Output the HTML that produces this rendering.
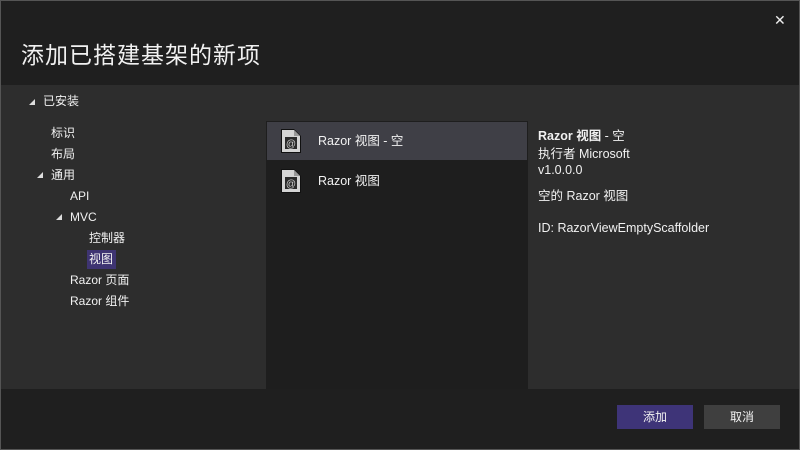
<!DOCTYPE html>
<html><head><meta charset="utf-8"><style>
*{margin:0;padding:0;box-sizing:border-box}
body{width:800px;height:450px;background:#1f1f1f;overflow:hidden;position:relative;font-family:"Liberation Sans","Noto Sans CJK SC",sans-serif;color:#f1f1f1;font-size:12px}
.frame{position:absolute;left:0;top:0;width:800px;height:450px;border:1px solid #555;pointer-events:none;z-index:5}
.title{position:absolute;left:21px;top:36px;font-size:23px;color:#f1f1f1;letter-spacing:1px}
.close{position:absolute;left:774px;top:12px;font-size:14px;color:#eee}
.body{position:absolute;left:0;top:85px;width:800px;height:304px;background:#2d2d2d}
.t{position:absolute;white-space:nowrap;font-size:12px;line-height:16px}
.d{font-size:12.5px}
.tri{position:absolute;width:0;height:0;border-left:6px solid transparent;border-bottom:6px solid #ddd}
.list{position:absolute;left:266px;top:121px;width:262px;height:268px;background:#1e1e1e}
.sel{position:absolute;left:267px;top:122px;width:260px;height:38px;background:#3f3f46}
.btn{position:absolute;top:405px;width:76px;height:24px;text-align:center;line-height:24px;font-size:12px}
</style></head><body>
<div class="frame"></div>
<div class="title">添加已搭建基架的新项</div>
<div class="close">✕</div>
<div class="body"></div>
<div class="tri" style="left:29px;top:99px"></div>
<div class="t" style="left:43px;top:93px">已安装</div>
<div class="t" style="left:51px;top:125px">标识</div>
<div class="t" style="left:51px;top:146px">布局</div>
<div class="tri" style="left:37px;top:172px"></div>
<div class="t" style="left:51px;top:167px">通用</div>
<div class="t" style="left:70px;top:188px">API</div>
<div class="tri" style="left:56px;top:214px"></div>
<div class="t" style="left:70px;top:209px">MVC</div>
<div class="t" style="left:89px;top:230px">控制器</div>
<div style="position:absolute;left:87px;top:250px;width:29px;height:19px;background:#3e3472"></div>
<div class="t" style="left:89px;top:251px">视图</div>
<div class="t" style="left:70px;top:272px">Razor 页面</div>
<div class="t" style="left:70px;top:293px">Razor 组件</div>
<div class="list"></div>
<div class="sel"></div>
<svg style="position:absolute;left:280px;top:128px" width="24" height="26" viewBox="0 0 24 26"><path d="M1 1H14L21 8V25H1Z" fill="#111"/><path d="M2 2H14L20 8V24H2Z" fill="#d4d4d4"/><path d="M5 9H17V21H5Z" fill="#2a2a2a"/><path d="M14 2V8H20" fill="#999"/><text x="11" y="19" font-size="10" fill="#ccc" text-anchor="middle" font-family="Liberation Sans">@</text></svg>
<svg style="position:absolute;left:280px;top:168px" width="24" height="26" viewBox="0 0 24 26"><path d="M1 1H14L21 8V25H1Z" fill="#111"/><path d="M2 2H14L20 8V24H2Z" fill="#d4d4d4"/><path d="M5 9H17V21H5Z" fill="#2a2a2a"/><path d="M14 2V8H20" fill="#999"/><text x="11" y="19" font-size="10" fill="#ccc" text-anchor="middle" font-family="Liberation Sans">@</text></svg>
<div class="t d" style="left:318px;top:133px">Razor 视图 - 空</div>
<div class="t d" style="left:318px;top:173px">Razor 视图</div>
<div class="t d" style="left:538px;top:128px"><b>Razor 视图</b> - 空</div>
<div class="t d" style="left:538px;top:146px">执行者 Microsoft</div>
<div class="t d" style="left:538px;top:162px">v1.0.0.0</div>
<div class="t d" style="left:538px;top:188px">空的 Razor 视图</div>
<div class="t d" style="left:538px;top:220px">ID: RazorViewEmptyScaffolder</div>
<div class="btn" style="left:617px;background:#3e3478">添加</div>
<div class="btn" style="left:704px;background:#3f3f3f">取消</div>
</body></html>
